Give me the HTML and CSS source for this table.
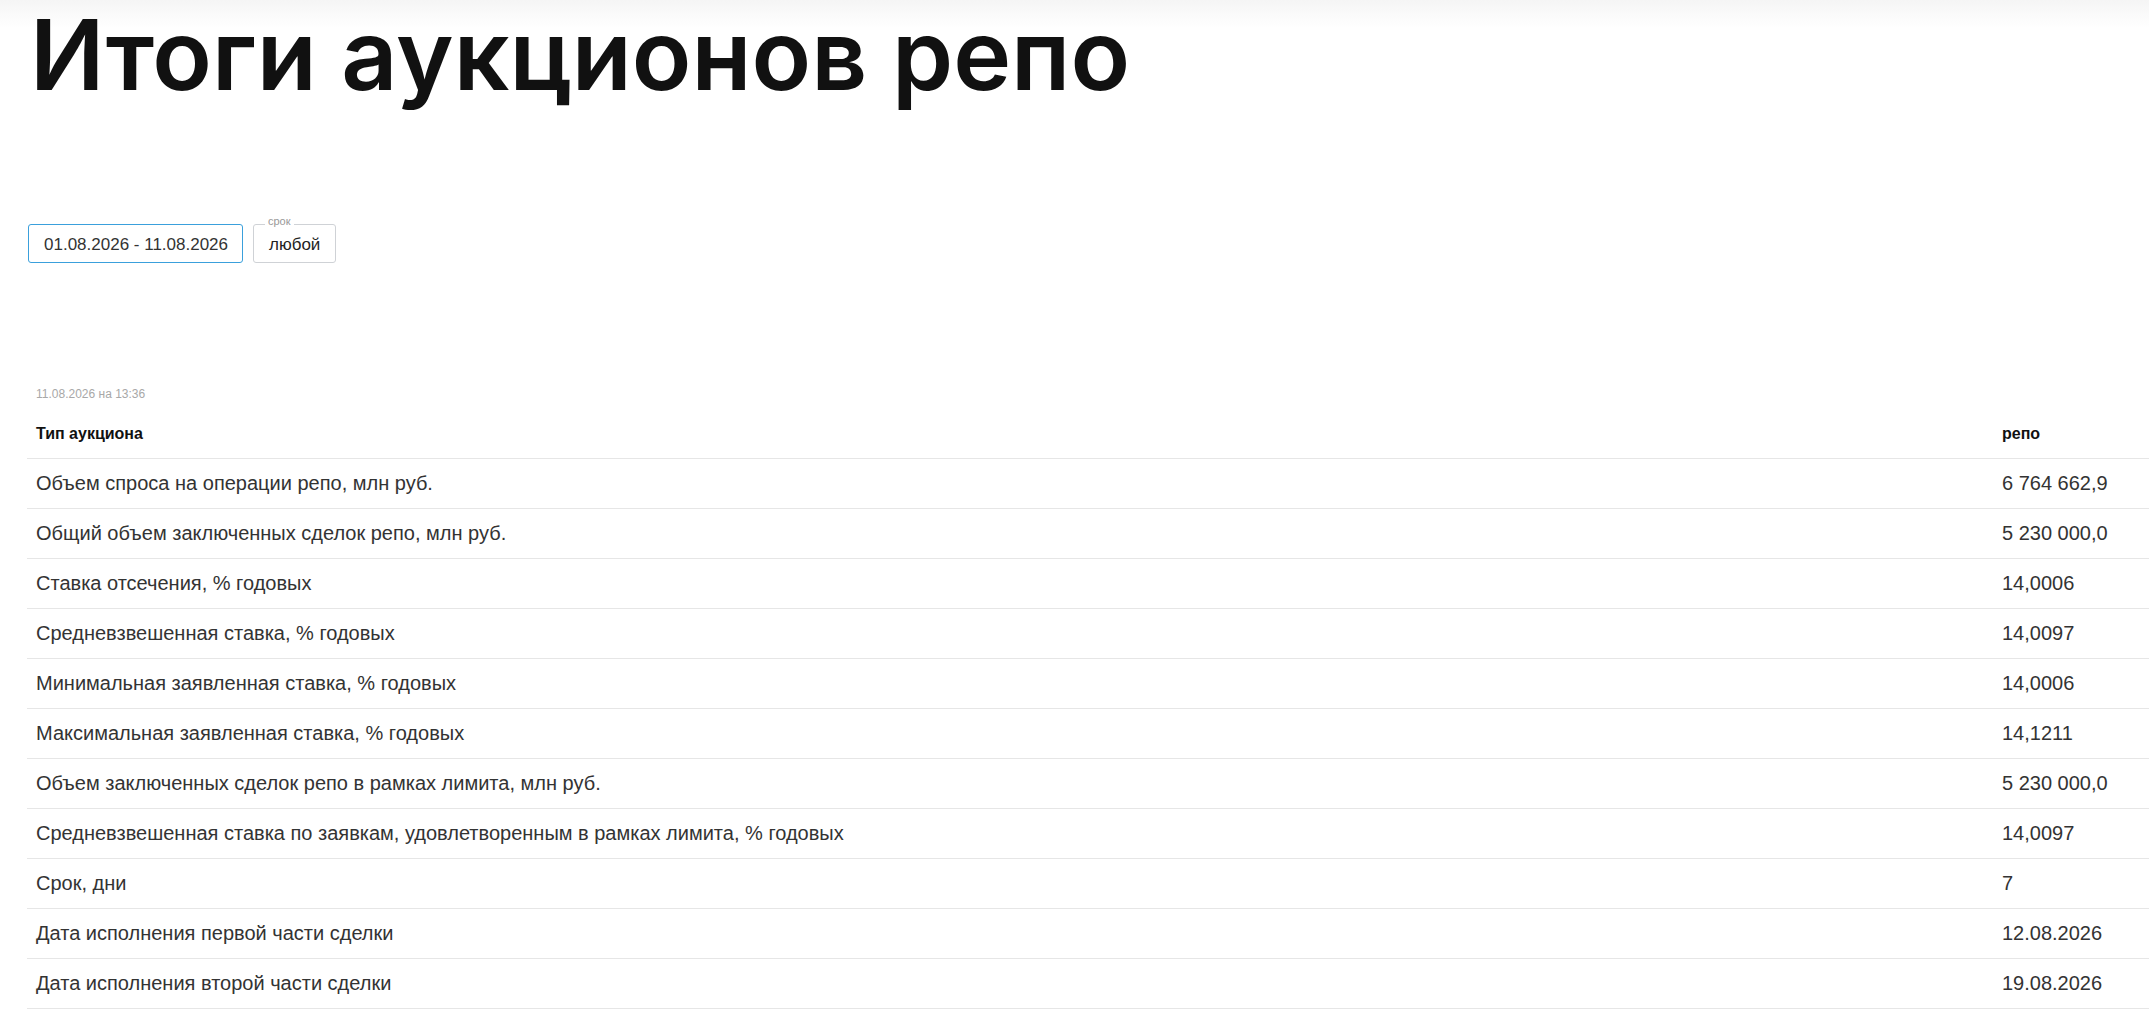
FILE: index.html
```html
<!DOCTYPE html>
<html lang="ru">
<head>
<meta charset="utf-8">
<title>Итоги аукционов репо</title>
<link rel="stylesheet" href="styles.css">
</head>
<body>
<div class="page">
  <h1 class="title">Итоги аукционов репо</h1>
  <div class="filters">
    <div class="field field-date">01.08.2026 - 11.08.2026</div>
    <div class="field field-term">
      <span class="legend">срок</span>
      любой
    </div>
  </div>
  <div class="stamp">11.08.2026 на 13:36</div>
  <div class="table" role="table">
    <div class="row head" role="row"><div class="c1">Тип аукциона</div><div class="c2">репо</div></div>
    <div class="row" role="row"><div class="c1">Объем спроса на операции репо, млн руб.</div><div class="c2">6 764 662,9</div></div>
    <div class="row" role="row"><div class="c1">Общий объем заключенных сделок репо, млн руб.</div><div class="c2">5 230 000,0</div></div>
    <div class="row" role="row"><div class="c1">Ставка отсечения, % годовых</div><div class="c2">14,0006</div></div>
    <div class="row" role="row"><div class="c1">Средневзвешенная ставка, % годовых</div><div class="c2">14,0097</div></div>
    <div class="row" role="row"><div class="c1">Минимальная заявленная ставка, % годовых</div><div class="c2">14,0006</div></div>
    <div class="row" role="row"><div class="c1">Максимальная заявленная ставка, % годовых</div><div class="c2">14,1211</div></div>
    <div class="row" role="row"><div class="c1">Объем заключенных сделок репо в рамках лимита, млн руб.</div><div class="c2">5 230 000,0</div></div>
    <div class="row" role="row"><div class="c1">Средневзвешенная ставка по заявкам, удовлетворенным в рамках лимита, % годовых</div><div class="c2">14,0097</div></div>
    <div class="row" role="row"><div class="c1">Срок, дни</div><div class="c2">7</div></div>
    <div class="row" role="row"><div class="c1">Дата исполнения первой части сделки</div><div class="c2">12.08.2026</div></div>
    <div class="row" role="row"><div class="c1">Дата исполнения второй части сделки</div><div class="c2">19.08.2026</div></div>
  </div>
</div>
</body>
</html>
```

FILE: styles.css
```css
html, body {
  margin: 0;
  padding: 0;
  background: #fff;
}
body {
  font-family: "Liberation Sans", Arial, sans-serif;
  color: #333;
  overflow: hidden;
}
.page {
  background: linear-gradient(#f5f5f5, #ffffff 28px) no-repeat;
  background-size: 100% 28px;
  padding-top: 0;
}
.title {
  margin: 0 0 0 30px;
  font-family: Inter, Roboto, "Liberation Sans", sans-serif;
  font-weight: 600;
  font-size: 98px;
  line-height: 110px;
  color: #111;
  letter-spacing: 0;
}
.filters {
  display: flex;
  gap: 10px;
  margin: 114px 0 0 28px;
}
.field {
  position: relative;
  box-sizing: border-box;
  height: 39px;
  border: 1px solid #cfd2d6;
  border-radius: 3px;
  padding: 2px 15px 0;
  display: flex;
  align-items: center;
  font-size: 17px;
  color: #222;
  white-space: nowrap;
}
.field-date {
  width: 215px;
  border-color: #3aa0dc;
  color: #333;
}
.field-term {
  width: 83px;
}
.legend {
  position: absolute;
  top: -11px;
  left: 11px;
  padding: 0 3px;
  background: #fff;
  font-size: 11px;
  line-height: 14px;
  color: #999;
}
.stamp {
  margin: 123px 0 0 36px;
  font-size: 12px;
  line-height: 16px;
  color: #a8a8a8;
}
.table {
  margin: 7px 0 0 27px;
}
.row {
  display: grid;
  grid-template-columns: 1966px 1fr;
  align-items: center;
  box-sizing: border-box;
  height: 50px;
  border-bottom: 1px solid #e6e6e6;
  font-size: 20px;
  color: #333;
}
.row .c1, .row .c2 {
  padding-left: 9px;
  white-space: nowrap;
}
.row.head {
  font-size: 16px;
  font-weight: 700;
  color: #111;
}
```
